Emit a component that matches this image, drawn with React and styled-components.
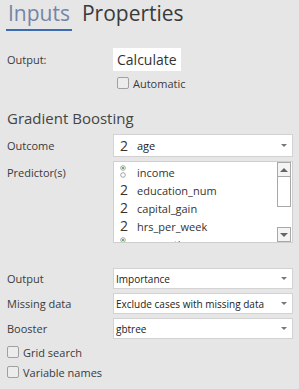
import React from "react";
import styled, { createGlobalStyle } from "styled-components";

const Global = createGlobalStyle`
  html, body { margin: 0; padding: 0; background: #e6e6e6; }
  body { font-family: "Open Sans", "DejaVu Sans", sans-serif; }
  * { box-sizing: border-box; }
`;

const Page = styled.div`
  width: 299px;
  height: 389px;
  overflow: hidden;
  background: #e6e6e6;
  color: #333;
`;

const Tabs = styled.div`
  display: flex;
  align-items: flex-start;
  gap: 8px;
  padding-left: 6px;
  height: 31px;
`;

const Tab = styled.div`
  font-size: 21px;
  line-height: 26px;
  padding: 0 2px 3px;
  color: ${(p) => (p.$active ? "#7585a6" : "#3a3a3a")};
  border-bottom: 2px solid ${(p) => (p.$active ? "#3d6bb0" : "transparent")};
`;

const Form = styled.div`
  padding: 0 6px 0 7px;
`;

const Row = styled.div`
  display: grid;
  grid-template-columns: 106px 180px;
  align-items: ${(p) => (p.$top ? "start" : "center")};
  margin-top: ${(p) => p.$mt || 0}px;
`;

const Label = styled.div`
  font-size: 11px;
  line-height: 15px;
  color: #3a3a3a;
  padding-top: ${(p) => (p.$top ? "4px" : "0")};
`;

const CalcButton = styled.div`
  justify-self: start;
  background: #fff;
  font-size: 14px;
  line-height: 19px;
  padding: 2px 4px;
  color: #333;
`;

const CheckRow = styled.div`
  display: flex;
  align-items: center;
  gap: 4px;
  height: ${(p) => p.$h || 14}px;
  font-size: 11px;
  color: #3a3a3a;
  margin-top: ${(p) => p.$mt || 0}px;
  margin-left: ${(p) => p.$ml || 0}px;
`;

const Box = styled.span`
  width: 12px;
  height: 12px;
  border: 1px solid #a0a0a0;
  border-radius: 2px;
  background: #ececec;
  flex: none;
`;

const Heading = styled.div`
  font-size: 15px;
  line-height: 20px;
  color: #444;
  margin-top: 18px;
`;

const Select = styled.div`
  height: ${(p) => p.$h || 21}px;
  background: #fff;
  border: 1px solid #d2d2d2;
  display: flex;
  align-items: center;
  padding: 0 5px 0 ${(p) => p.$pl || 2}px;
  font-size: ${(p) => p.$fs || 10}px;
  color: #222;
`;

const SelectText = styled.span`
  flex: 1;
  display: flex;
  align-items: center;
  white-space: nowrap;
  overflow: hidden;
`;

const Caret = styled.span`
  width: 0;
  height: 0;
  border-left: 3px solid transparent;
  border-right: 3px solid transparent;
  border-top: 3px solid #777;
  flex: none;
`;

const NumIcon = styled.span`
  width: 17px;
  font-size: 14px;
  line-height: 18px;
  color: #333;
  flex: none;
  display: flex;
  align-items: center;
`;

const ListBox = styled.div`
  height: 82px;
  background: #fff;
  border: 1px solid #cfcfcf;
  display: flex;
  overflow: hidden;
`;

const List = styled.div`
  flex: 1;
  padding-top: 1px;
  overflow: hidden;
`;

const Item = styled.div`
  height: 18px;
  display: flex;
  align-items: center;
  padding-left: 6px;
  font-size: 11px;
  color: #333;
  white-space: nowrap;
`;

const Scrollbar = styled.div`
  width: 15px;
  display: flex;
  flex-direction: column;
  padding-right: 1px;
`;

const ScrollBtn = styled.div`
  height: 15px;
  border: 1px solid #a8a8a8;
  background: #f4f4f4;
  display: flex;
  align-items: center;
  justify-content: center;
  flex: none;
`;

const Thumb = styled.div`
  height: 30px;
  border: 1px solid #a8a8a8;
  border-top: none;
  background: #fff;
  flex: none;
`;

const Track = styled.div`
  flex: 1;
`;

const Arrow = styled.span`
  width: 0;
  height: 0;
  border-left: 4px solid transparent;
  border-right: 4px solid transparent;
  ${(p) =>
    p.$up ? "border-bottom: 4px solid #666;" : "border-top: 4px solid #666;"}
`;

const Stack = styled.div`
  display: flex;
  flex-direction: column;
  gap: 4px;
  margin-top: ${(p) => p.$mt || 0}px;
`;

const NominalIcon = () => (
  <NumIcon>
    <svg width="7" height="14" viewBox="0 0 7 14">
      <circle cx="3" cy="3" r="2.3" fill="#fff" stroke="#9a9a9a" strokeWidth="0.9" />
      <circle cx="3" cy="3" r="1.1" fill="#3aa63a" />
      <circle cx="3" cy="10" r="2.3" fill="#fff" stroke="#9a9a9a" strokeWidth="0.9" />
    </svg>
  </NumIcon>
);

const items = [
  { t: "nom", n: "income" },
  { t: "num", n: "education_num" },
  { t: "num", n: "capital_gain" },
  { t: "num", n: "hrs_per_week" },
  { t: "nom", n: "occupation" },
];

export default function App() {
  return (
    <Page>
      <Global />
      <Tabs>
        <Tab $active>Inputs</Tab>
        <Tab>Properties</Tab>
      </Tabs>
      <Form>
        <Row $mt={17}>
          <Label>Output:</Label>
          <CalcButton>Calculate</CalcButton>
        </Row>
        <Row>
          <span />
          <CheckRow $mt={5} $ml={4}>
            <Box />
            Automatic
          </CheckRow>
        </Row>
        <Heading>Gradient Boosting</Heading>
        <Row $mt={6}>
          <Label>Outcome</Label>
          <Select $h={23} $pl={6} $fs={11}>
            <SelectText>
              <NumIcon>2</NumIcon>age
            </SelectText>
            <Caret />
          </Select>
        </Row>
        <Row $top $mt={4}>
          <Label $top>Predictor(s)</Label>
          <ListBox>
            <List>
              {items.map((it) => (
                <Item key={it.n}>
                  {it.t === "num" ? <NumIcon>2</NumIcon> : <NominalIcon />}
                  {it.n}
                </Item>
              ))}
            </List>
            <Scrollbar>
              <ScrollBtn>
                <Arrow $up />
              </ScrollBtn>
              <Thumb />
              <Track />
              <ScrollBtn>
                <Arrow />
              </ScrollBtn>
            </Scrollbar>
          </ListBox>
        </Row>
        <Stack $mt={25}>
          <Row>
            <Label>Output</Label>
            <Select>
              <SelectText>Importance</SelectText>
              <Caret />
            </Select>
          </Row>
          <Row>
            <Label>Missing data</Label>
            <Select>
              <SelectText>Exclude cases with missing data</SelectText>
              <Caret />
            </Select>
          </Row>
          <Row>
            <Label>Booster</Label>
            <Select>
              <SelectText>gbtree</SelectText>
              <Caret />
            </Select>
          </Row>
        </Stack>
        <CheckRow $h={20} $mt={3}>
          <Box />
          Grid search
        </CheckRow>
        <CheckRow $h={20}>
          <Box />
          Variable names
        </CheckRow>
      </Form>
    </Page>
  );
}
